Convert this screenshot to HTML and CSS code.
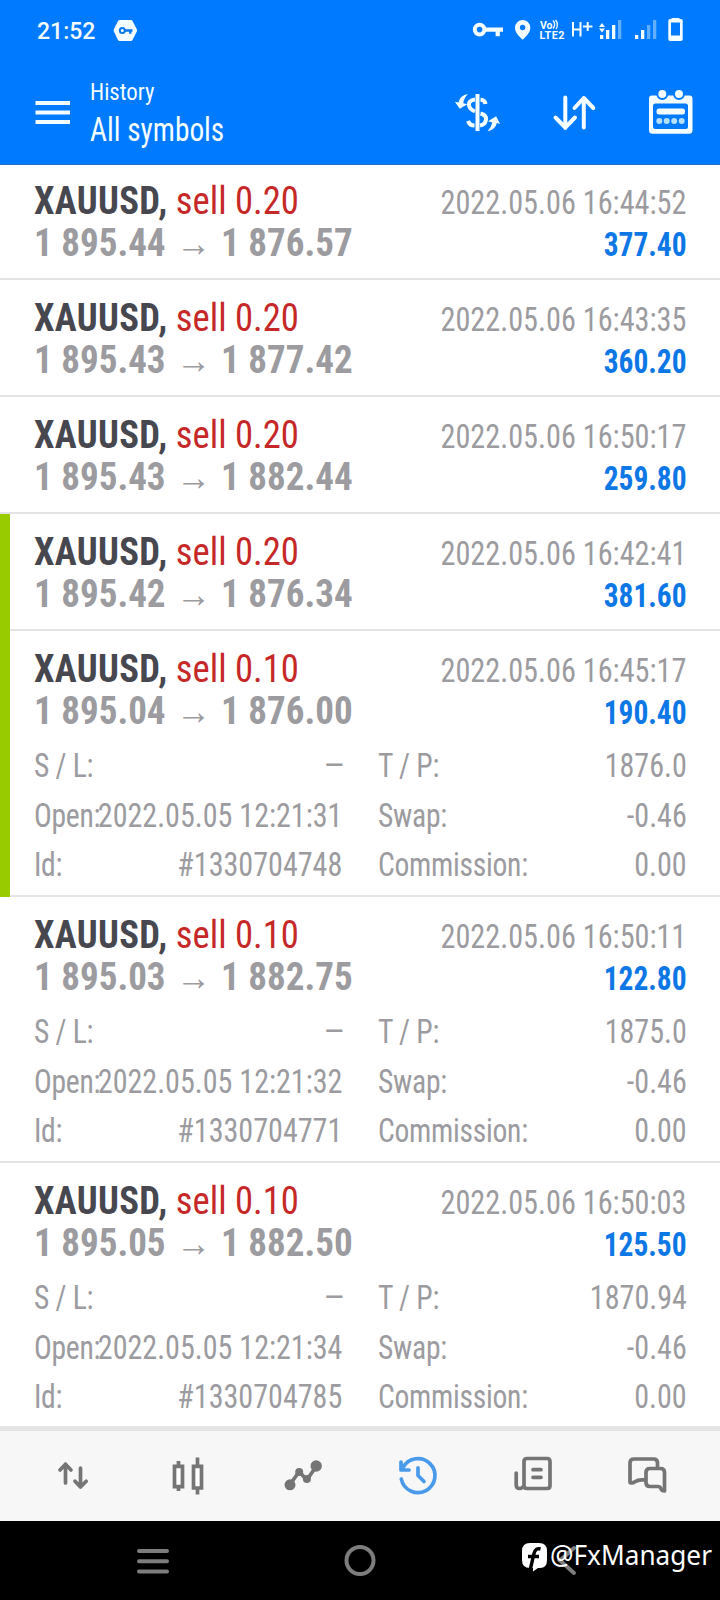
FILE: index.html
```
<!DOCTYPE html>
<html lang="en">
<head>
<meta charset="utf-8">
<title>History</title>
<link rel="stylesheet" href="styles.css">
</head>
<body>
<div class="screen">
  <header class="header">
    <div class="status">
      <span class="clock">21:52</span>
      <svg class="vpn" width="24" height="24" viewBox="113 17 24 24"><path d="M119.500 19h11.500q1 0 1.500 1l4.200 8q.6 1.400 0 2.700l-4.200 8.300q-.5 1-1.500 1h-11.500q-1 0-1.500-1l-4-8.300q-.6-1.300 0-2.700l4-8q.5-1 1.500-1z" fill="#f4fdff"/><circle cx="122.300" cy="29.500" r="2.500" fill="none" stroke="#0b78e8" stroke-width="2"/><path d="M125 29.500h7.500M130.300 29.500v3.300" stroke="#0b78e8" stroke-width="2.300" fill="none"/></svg>
      <div class="system-icons">
        <svg width="40" height="40" viewBox="470 10 40 40"><circle cx="479.600" cy="29.600" r="4.800" class="line" stroke-width="4"/><path d="M484 29.600h19M497.700 30v6.200" class="line" stroke-width="4.200"/></svg>
        <svg width="27" height="40" viewBox="510 10 27 40"><path d="M522.700 20a7.600 7.600 0 0 0-7.700 7.700c0 5 4 8.300 7.700 12 3.600-3.700 7.600-7 7.600-12a7.600 7.600 0 0 0-7.600-7.700z" fill="#f4fdff"/><circle cx="522.600" cy="27.500" r="2.700" fill="#007aff"/></svg>
        <svg width="31" height="40" viewBox="537 10 31 40"><text x="540" y="28.500" class="tiny" font-size="10.500">Vo</text><path d="M553 20.500q3.400 3.800 0 8M555.500 20q3.600 4.200.5 9" class="line" stroke-width="1.300"/><text x="539.500" y="39" class="tiny" font-size="10.800" textLength="25">LTE2</text></svg>
        <svg width="29" height="40" viewBox="568 10 29 40"><path d="M573 22v14.500M580.500 22v14.500M573 29.500h7.500" class="line" stroke-width="2"/><path d="M583 26.500h9.500M587.700 22v9" class="line" stroke-width="2"/></svg>
        <svg width="31" height="40" viewBox="597 10 31 40" fill="#f4fdff"><path d="M599 27l3-4 3 4zM599 28.500l3 4 3-4zM600 35h3.300v4H600zM606 30h3.300v9H606zM612 25h3.300v14H612z"/><path d="M618 20h3.300v19H618z" opacity=".4"/></svg>
        <svg width="34" height="40" viewBox="628 10 34 40" fill="#f4fdff"><path d="M635 35h3.300v4H635zM641 30h3.300v9H641z"/><path d="M647 25h3.300v14H647zM653 20h3.300v19H653z" opacity=".4"/></svg>
        <svg width="24" height="40" viewBox="662 10 24 40"><path d="M671.500 19v-1h8v1h1.500q1.700 0 1.700 1.700v18.500q0 1.700-1.700 1.700h-11q-1.700 0-1.700-1.700v-18.500q0-1.700 1.700-1.700z" fill="#f4fdff"/><path d="M671 22.500h9v13h-9z" fill="#007aff"/></svg>
      </div>
    </div>
    <div class="toolbar">
      <svg class="menu" width="36" height="26" viewBox="35 99 36 26"><path d="M35.500 103h34.500M35.500 112.500h34.500M35.500 122h34.500" class="line" stroke-width="4"/></svg>
      <div class="titles"><div class="subtitle">History</div><div class="title">All symbols</div></div>
      <div class="actions">
        <svg width="50" height="44" viewBox="453 90 50 44"><path d="M477.500 94v37" class="line" stroke-width="4"/><path d="M475 99.500c-5 .5-6.500 3-6 6 .5 3 3.500 5 6 6M474.500 125.500q-5 0-6.500-4.500M480.500 99.500q4.500.5 5 4.500M480.500 113.500c4 1 6 3.200 5.500 6.200-.5 3.600-3 5.300-6 5.800" class="line" stroke-width="4"/><path d="M468 94q-8 1-9.500 8.500l-3.700-.7 5 7 7.500-4.500-4-1q.7-5.700 4.700-9.300zM487.500 131.300q8-1.500 9.300-8.300l3.300 1-4-7.700-8 5 4.200 1.200q-1 5-4.800 8.800z" fill="#f4fdff"/></svg>
        <svg width="46" height="40" viewBox="552 92 46 40"><path d="M565.300 97.500V128M555.500 117.500l9.800 10 9.700-10M583.800 127.500V98M574.500 108l9.300-10 9.500 10" class="line round" stroke-width="4"/></svg>
        <svg width="48" height="48" viewBox="647 88 48 48"><path d="M652 95.500h37.500q3 0 3 3v31.700q0 3.500-3.500 3.500h-36.500q-3.500 0-3.500-3.500V98.500q0-3 3-3z" fill="#f4fdff"/><rect x="653" y="103.500" width="35" height="25.500" rx="2.500" fill="#007aff"/><circle cx="662.300" cy="94" r="5" class="knob"/><circle cx="679" cy="94" r="5" class="knob"/><rect x="656.500" y="108.500" width="28.500" height="6" rx="2.500" fill="#f4fdff"/><g fill="#b5e0ff"><circle cx="659.300" cy="121" r="3"/><circle cx="666.700" cy="121" r="3"/><circle cx="674.200" cy="121" r="3"/><circle cx="681.700" cy="121" r="3"/></g></svg>
      </div>
    </div>
  </header>

  <main class="deals">
    <article class="deal">
      <div class="line-row"><span class="name"><b>XAUUSD,</b> <i>sell 0.20</i></span><span class="date">2022.05.06 16:44:52</span></div>
      <div class="line-row"><span class="prices"><b>1 895.44</b><span class="arrow">→</span><b>1 876.57</b></span><span class="profit">377.40</span></div>
    </article>
    <article class="deal">
      <div class="line-row"><span class="name"><b>XAUUSD,</b> <i>sell 0.20</i></span><span class="date">2022.05.06 16:43:35</span></div>
      <div class="line-row"><span class="prices"><b>1 895.43</b><span class="arrow">→</span><b>1 877.42</b></span><span class="profit">360.20</span></div>
    </article>
    <article class="deal">
      <div class="line-row"><span class="name"><b>XAUUSD,</b> <i>sell 0.20</i></span><span class="date">2022.05.06 16:50:17</span></div>
      <div class="line-row"><span class="prices"><b>1 895.43</b><span class="arrow">→</span><b>1 882.44</b></span><span class="profit">259.80</span></div>
    </article>
    <article class="deal marked">
      <div class="line-row"><span class="name"><b>XAUUSD,</b> <i>sell 0.20</i></span><span class="date">2022.05.06 16:42:41</span></div>
      <div class="line-row"><span class="prices"><b>1 895.42</b><span class="arrow">→</span><b>1 876.34</b></span><span class="profit">381.60</span></div>
    </article>
    <article class="deal open marked">
      <div class="line-row"><span class="name"><b>XAUUSD,</b> <i>sell 0.10</i></span><span class="date">2022.05.06 16:45:17</span></div>
      <div class="line-row"><span class="prices"><b>1 895.04</b><span class="arrow">→</span><b>1 876.00</b></span><span class="profit">190.40</span></div>
      <dl class="details">
        <div><dt>S / L:</dt><dd class="dash">–</dd></div><div><dt>T / P:</dt><dd>1876.0</dd></div>
        <div><dt>Open:</dt><dd>2022.05.05 12:21:31</dd></div><div><dt>Swap:</dt><dd>-0.46</dd></div>
        <div><dt>Id:</dt><dd>#1330704748</dd></div><div><dt>Commission:</dt><dd>0.00</dd></div>
      </dl>
    </article>
    <article class="deal open">
      <div class="line-row"><span class="name"><b>XAUUSD,</b> <i>sell 0.10</i></span><span class="date">2022.05.06 16:50:11</span></div>
      <div class="line-row"><span class="prices"><b>1 895.03</b><span class="arrow">→</span><b>1 882.75</b></span><span class="profit">122.80</span></div>
      <dl class="details">
        <div><dt>S / L:</dt><dd class="dash">–</dd></div><div><dt>T / P:</dt><dd>1875.0</dd></div>
        <div><dt>Open:</dt><dd>2022.05.05 12:21:32</dd></div><div><dt>Swap:</dt><dd>-0.46</dd></div>
        <div><dt>Id:</dt><dd>#1330704771</dd></div><div><dt>Commission:</dt><dd>0.00</dd></div>
      </dl>
    </article>
    <article class="deal open">
      <div class="line-row"><span class="name"><b>XAUUSD,</b> <i>sell 0.10</i></span><span class="date">2022.05.06 16:50:03</span></div>
      <div class="line-row"><span class="prices"><b>1 895.05</b><span class="arrow">→</span><b>1 882.50</b></span><span class="profit">125.50</span></div>
      <dl class="details">
        <div><dt>S / L:</dt><dd class="dash">–</dd></div><div><dt>T / P:</dt><dd>1870.94</dd></div>
        <div><dt>Open:</dt><dd>2022.05.05 12:21:34</dd></div><div><dt>Swap:</dt><dd>-0.46</dd></div>
        <div><dt>Id:</dt><dd>#1330704785</dd></div><div><dt>Commission:</dt><dd>0.00</dd></div>
      </dl>
    </article>
  </main>

  <nav class="tabs">
    <svg width="46" height="46" viewBox="49.500 1452 46 46"><path d="M65 1482V1463M59.500 1469l5.500-5.800 5.500 5.800M80 1467v19M74.500 1480.200l5.500 5.800 5.700-5.800"/></svg>
    <svg width="46" height="46" viewBox="164.500 1452 46 46"><g class="square"><path d="M178 1460v30M197 1456.500v37"/><path d="M174 1465.300h8v20.400h-8zM193 1465.300h8v21.700h-8z" fill="#fff"/></g></svg>
    <svg width="46" height="46" viewBox="279.500 1452 46 46"><path d="M289.500 1483.500l9.200-13 7.600 8.500 9.700-14"/><g fill="#757575" stroke="none"><circle cx="289.500" cy="1483.800" r="5.500"/><circle cx="298.700" cy="1471" r="4"/><circle cx="306.400" cy="1478" r="4"/><circle cx="315.700" cy="1465" r="5.700"/></g></svg>
    <svg class="active" width="46" height="46" viewBox="394.500 1452 46 46"><path d="M400.800 1478a17 17 0 1 0 1.700-11.500M400.500 1461v8h8M417.500 1466.800v7.700l6 6"/></svg>
    <svg width="46" height="46" viewBox="509.500 1452 46 46"><path d="M526.500 1457.500h20q3 0 3 3v24q0 3-3 3h-20q-3 0-3-3v-24q0-3 3-3zM515.700 1472v12q0 3.500 3.500 3.500 2 0 3.500-2M532.500 1468.700h8M532.500 1476.300h8"/></svg>
    <svg width="46" height="46" viewBox="624.500 1452 46 46"><path d="M657 1465v-3q0-4-4-4h-19.500q-4 0-4 4v19.500q2.500 1 5-.8 3-2.200 8.500-1.800M649.500 1467.500h10.500q4 0 4 4v18.500q-3 0-4-3-.5-1.500-2.500-1.500h-8q-4 0-4-4v-10q0-4 4-4z"/></svg>
  </nav>

  <footer class="sysnav">
    <svg width="40" height="36" viewBox="133.500 1543 40 36"><path d="M139.500 1551h28M139.500 1561.300h28M139.500 1571.600h28"/></svg>
    <svg width="40" height="36" viewBox="340 1543 40 36"><circle cx="360" cy="1560.500" r="13.500"/></svg>
    <svg width="40" height="36" viewBox="547 1543 40 36"><path d="M574 1548l-14 12.500 14 12.500"/></svg>
    <div class="watermark">
      <svg width="25" height="30" viewBox="521.500 1543 25 30"><path d="M529.500 1544h9q8 0 8 8v9q0 8-7 8h-2l-5 3.500v-3.500h-3q-8 0-8-8v-9q0-8 8-8z" fill="#fff" stroke="none"/><path d="M540 1550q-5-1.500-6.500 4.500l-3.500 15M527.500 1557.500h11" stroke="#000" stroke-width="3.400" stroke-linecap="butt"/></svg>
      <span>@FxManager</span>
    </div>
  </footer>
</div>
</body>
</html>
```
FILE: styles.css
```
* { box-sizing: border-box; }
body { margin: 0; background: #000; font-family: "Roboto Condensed", Roboto, sans-serif; }
svg { display: block; flex: none; }
.screen { display: flex; flex-direction: column; width: 720px; height: 1600px; overflow: hidden; background: #fff; }

.header { height: 165px; flex: none; background: #007aff; border-bottom: 1px solid #2a6cb5; color: #f4fdff; }
.header .line { fill: none; stroke: #f4fdff; }
.header .round { stroke-linecap: round; stroke-linejoin: round; }
.knob { fill: #f4fdff; stroke: #007aff; stroke-width: 2; }
.status { display: flex; align-items: center; height: 60px; padding: 0 34px 0 37px; }
.clock { width: 76px; font: 500 23px/58px Roboto, sans-serif; padding-top: 3px; }
.system-icons { display: flex; margin-left: auto; }
.tiny { font-family: Roboto, sans-serif; font-weight: 700; fill: #f4fdff; }
.toolbar { display: flex; align-items: center; height: 104px; padding: 0 25px 0 35px; }
.titles { margin-left: 19px; padding-top: 4px; white-space: nowrap; }
.subtitle { font-size: 24px; line-height: 30px; transform: scaleX(.95); transform-origin: left; }
.title { font-size: 33px; line-height: 45px; transform: scaleX(.89); transform-origin: left; }
.actions { display: flex; align-items: center; gap: 49px; margin-left: auto; }

.deals { flex: none; height: 1261px; overflow: hidden; }
.deal { height: 117px; padding: 16.5px 33.5px 0 34px; border-bottom: 2px solid #e4e4e6; color: #9b9ba0; }
.deal:first-child { height: 115px; padding-top: 14.5px; }
.deal.open { height: 266px; }
.deal.marked { position: relative; }
.deal.marked::before { content: ""; position: absolute; left: 0; top: 0; bottom: -2px; width: 10px; background: #99cc00; }
.line-row { display: flex; justify-content: space-between; align-items: baseline; height: 42px; line-height: 42px; white-space: nowrap; }
.name { font-size: 39.4px; transform: scaleX(.93); transform-origin: left; }
.name b { color: #47474f; letter-spacing: .35px; }
.name i { color: #c62828; font-style: normal; }
.date, .profit { font-size: 32.5px; transform: scaleX(.93); transform-origin: right; }
.profit { color: #0e77e6; font-weight: 700; transform: scaleX(.905); }
.prices { display: flex; align-items: baseline; font-size: 39.4px; transform: scaleX(.94); transform-origin: left; }
.arrow { width: 59px; text-align: center; font-family: "Liberation Sans", sans-serif; font-size: 37px; }
.details { display: grid; grid-template-columns: 308.5px 309px; column-gap: 35px; margin: 10.6px 0 0; font-size: 32.5px; line-height: 49.5px; white-space: nowrap; }
.details div { display: flex; justify-content: space-between; height: 49.5px; }
.details dt { width: 0; transform: scaleX(.91); transform-origin: left; letter-spacing: -.3px; }
.details dd { margin: 0; transform: scaleX(.925); transform-origin: right; }
.details .dash { margin-right: -3px; transform: scaleX(1.2); }

.tabs { display: grid; grid-template-columns: repeat(6, 115px); justify-content: center; justify-items: center; align-items: center; flex: none; height: 95px; padding-bottom: 1px; border-top: 5px solid #e4e4e4; background: #f7f7f7; }
.tabs svg { fill: none; stroke: #757575; stroke-width: 3.7; stroke-linecap: round; stroke-linejoin: round; }
.tabs .square { stroke-linecap: butt; stroke-linejoin: miter; }
.tabs .active { stroke: #4a9aeb; }

.sysnav { position: relative; display: flex; justify-content: space-between; align-items: flex-start; height: 79px; padding: 22px 133px 0 133px; background: #000; }
.sysnav svg { fill: none; stroke: #7d7d7d; stroke-width: 4; stroke-linecap: round; }
.watermark { position: absolute; left: 521.5px; top: 17px; display: flex; align-items: center; color: #fff; font: 400 28px/34px "Noto Sans", sans-serif; }
.watermark svg { margin-top: 4px; }
.watermark span { margin-left: 3px; margin-top: -2px; transform: scaleX(.935); transform-origin: left; }
```
